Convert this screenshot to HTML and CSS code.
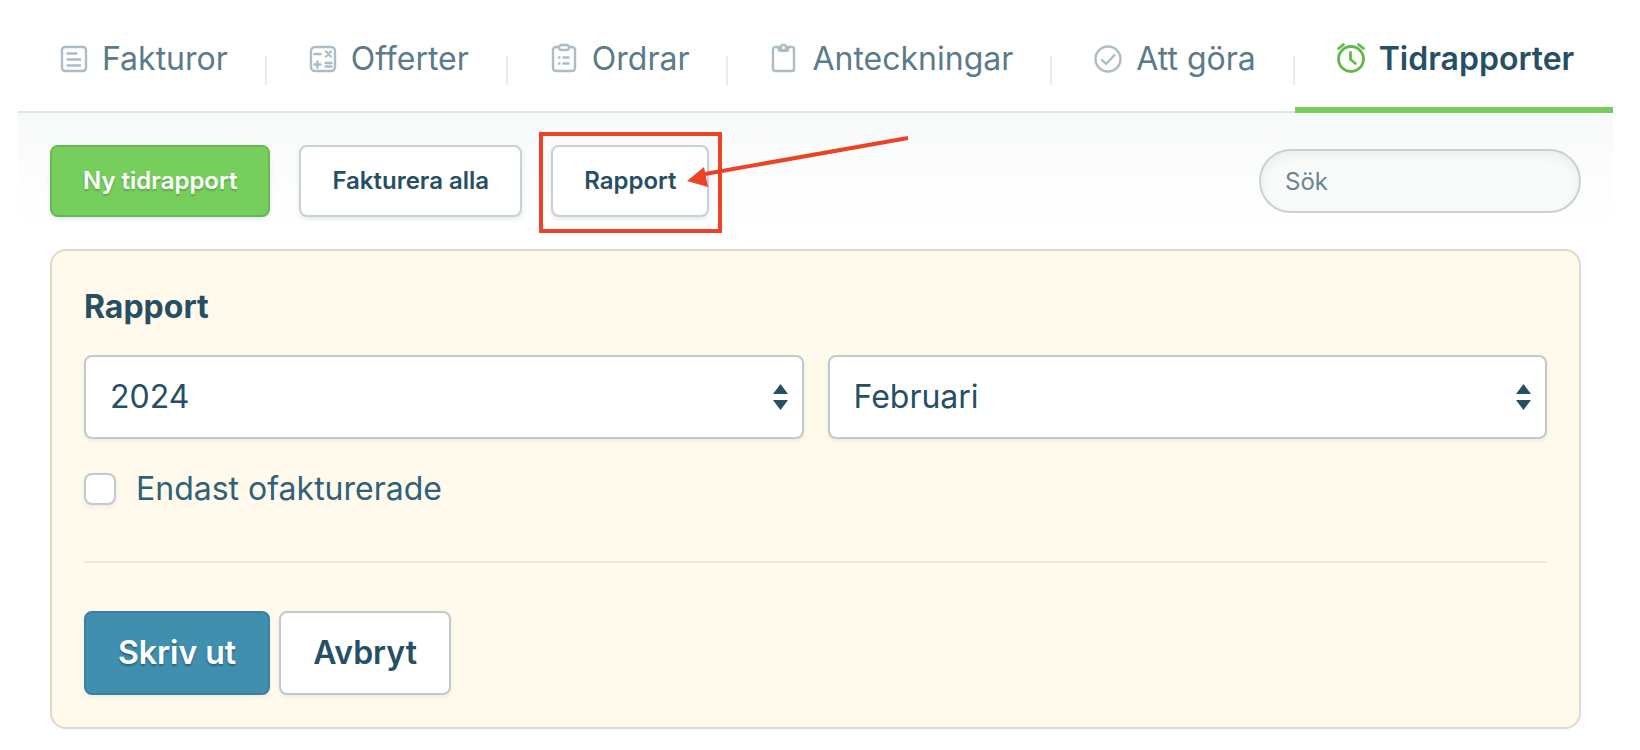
FILE: index.html
```html
<!DOCTYPE html>
<html lang="sv">
<head>
  <meta charset="UTF-8">
  <meta name="viewport" content="width=device-width, initial-scale=1.0">
  <title>Tidrapporter</title>
  <link rel="stylesheet" href="styles.css">
</head>
<body>
  <div class="page">
    <nav class="tabs">
      <a class="tab" href="#fakturor">
        <svg class="icon" viewBox="0 0 32 32">
          <rect x="4" y="4" width="24" height="24" rx="3"/>
          <path d="M9.500 10.500h9M9.500 16.500h12.500M9.500 22.500h12.500"/>
        </svg>
        <span>Fakturor</span>
      </a>
      <a class="tab" href="#offerter">
        <svg class="icon" viewBox="0 0 32 32">
          <rect x="4" y="4" width="24" height="24" rx="4"/>
          <path d="M7.500 11h6M19 8.500l5 5M24 8.500l-5 5M7.500 21.500h6M10.500 18.500v6M18.500 20h6M18.500 23.500h6"/>
        </svg>
        <span>Offerter</span>
      </a>
      <a class="tab" href="#ordrar">
        <svg class="icon" viewBox="0 0 32 32">
          <path d="M11 4H8a3 3 0 0 0-3 3v18a3 3 0 0 0 3 3h16a3 3 0 0 0 3-3V7a3 3 0 0 0-3-3h-3"/>
          <rect x="11" y="2" width="10" height="5" rx="2.500"/>
          <path d="M11 14.500h.5M11 20.500h.5M15.500 14.500h5M15.500 20.500h5"/>
        </svg>
        <span>Ordrar</span>
      </a>
      <a class="tab" href="#anteckningar">
        <svg class="icon" viewBox="0 0 32 32">
          <rect x="5" y="4" width="21" height="24" rx="2"/>
          <path class="fill" d="M9.500 4H12a3.500 3.500 0 0 1 7 0h2.500v2a3 3 0 0 1-3 3h-6a3 3 0 0 1-3-3z"/>
          <circle class="hole" cx="15.500" cy="4.500" r="1.500"/>
        </svg>
        <span>Anteckningar</span>
      </a>
      <a class="tab" href="#att-gora">
        <svg class="icon" viewBox="0 0 32 32">
          <circle cx="16" cy="16" r="12.500"/>
          <path d="M10 17l4 4 8.500-9"/>
        </svg>
        <span>Att göra</span>
      </a>
      <a class="tab active" href="#tidrapporter" aria-current="page">
        <svg class="icon" viewBox="0 0 32 32">
          <circle cx="16" cy="16" r="12.500"/>
          <path d="M15.500 9.500v7l5 4M3.500 5.500l5-4M23.500 1.500l5 4"/>
        </svg>
        <span>Tidrapporter</span>
      </a>
    </nav>

    <main class="content">
      <div class="toolbar">
        <button class="button primary" type="button">Ny tidrapport</button>
        <button class="button" type="button">Fakturera alla</button>
        <div class="marked">
          <button class="button" type="button">Rapport</button>
          <svg class="arrow" viewBox="0 0 222 56">
            <path class="line" d="M18 41L221 5"/>
            <path class="head" d="M0 48l17-14 4 20z"/>
          </svg>
        </div>
        <input class="search" type="search" placeholder="Sök" aria-label="Sök">
      </div>

      <form class="panel">
        <h2>Rapport</h2>
        <div class="fields">
          <div class="select">
            <select aria-label="År">
              <option>2023</option>
              <option selected>2024</option>
            </select>
            <svg viewBox="0 0 15 26"><path d="M0 10L7.500 0 15 10zM0 16h15L7.500 26z"/></svg>
          </div>
          <div class="select">
            <select aria-label="Månad">
              <option>Januari</option>
              <option selected>Februari</option>
              <option>Mars</option>
            </select>
            <svg viewBox="0 0 15 26"><path d="M0 10L7.500 0 15 10zM0 16h15L7.500 26z"/></svg>
          </div>
        </div>
        <label class="check">
          <input type="checkbox">
          <span>Endast ofakturerade</span>
        </label>
        <div class="actions">
          <button class="button large blue" type="button">Skriv ut</button>
          <button class="button large" type="button">Avbryt</button>
        </div>
      </form>
    </main>
  </div>
</body>
</html>
```

FILE: styles.css
```css
* {
  box-sizing: border-box;
}
body {
  margin: 0;
  background: #fff;
  color: #264f63;
  font-family: Inter, "Liberation Sans", sans-serif;
  font-size: 32px;
  line-height: 40px;
}
button,
input,
select {
  font: inherit;
  color: inherit;
}
.page {
  margin: 0 27px 0 18px;
}

/* Tabs */
.tabs {
  display: flex;
  height: 113px;
  border-bottom: 2px solid #dfe7e9;
}
.tab {
  position: relative;
  display: flex;
  align-items: center;
  gap: 12px;
  padding: 6px 39px 0 40px;
  color: #5c7a89;
  text-decoration: none;
  white-space: nowrap;
}
.tab:not(.active)::after {
  content: "";
  position: absolute;
  right: 0;
  top: 56px;
  width: 2px;
  height: 29px;
  background: #e7eced;
}
.tab.active {
  flex: 1;
  margin-bottom: -2px;
  padding-bottom: 2px;
  color: #264f63;
  font-weight: 600;
  box-shadow: inset 0 -6px #76ce5d;
}
.icon {
  width: 32px;
  height: 32px;
  flex: none;
  overflow: visible;
  fill: none;
  stroke: #adbdc5;
  stroke-width: 2.4;
  stroke-linecap: round;
  stroke-linejoin: round;
}
.icon .fill {
  fill: #adbdc5;
  stroke: none;
}
.icon .hole {
  fill: #fff;
  stroke: none;
}
.active .icon {
  stroke: #62b84b;
  stroke-width: 2.8;
}

/* Toolbar */
.content {
  padding: 32px 32px 20px;
  background: linear-gradient(#f8faf9, #fff 120px);
}
.toolbar {
  display: flex;
  align-items: center;
  gap: 29px;
  margin-bottom: 32px;
}
.button {
  height: 72px;
  padding: 0 31px;
  border: 2px solid #c6d2d5;
  border-radius: 8px;
  background: #fff;
  box-shadow: 0 2px 4px rgba(38, 79, 99, 0.12);
  color: #264f63;
  font-size: 24px;
  font-weight: 600;
  white-space: nowrap;
  cursor: pointer;
}
.button.primary {
  border-color: #67b850;
  background: #76ce5d;
  color: #fff;
  text-shadow: 0 2px 2px rgba(0, 0, 0, 0.2);
}
.search {
  width: 322px;
  height: 64px;
  margin-left: auto;
  padding: 0 24px;
  border: 2px solid #c6d2d5;
  border-radius: 32px;
  background: #f9fbfa;
  box-shadow: inset 0 4px 12px rgba(0, 0, 0, 0.06);
  font-size: 24px;
  appearance: none;
}
.search::placeholder {
  color: #6b858e;
  opacity: 1;
}

/* Red frame and arrow on top of the button */
.marked {
  position: relative;
}
.marked .button {
  display: block;
}
.marked::after {
  content: "";
  position: absolute;
  inset: -13px -13px -16px -12px;
  border: 4px solid #ec4226;
  pointer-events: none;
}
.arrow {
  position: absolute;
  z-index: 1;
  left: 136px;
  top: -12px;
  width: 222px;
  height: 56px;
  pointer-events: none;
}
.arrow .line {
  fill: none;
  stroke: #ec4226;
  stroke-width: 4;
}
.arrow .head {
  fill: #ec4226;
}

/* Report panel */
.panel {
  padding: 36px 32px 32px;
  border: 2px solid #e5d7c5;
  border-radius: 16px;
  background: #fffaec;
}
.panel h2 {
  margin: 0 0 28px;
  font-size: 32px;
  font-weight: 700;
}
.fields {
  display: grid;
  grid-template-columns: 1fr 1fr;
  gap: 24px;
}
.select {
  position: relative;
}
.select select {
  display: block;
  width: 100%;
  height: 84px;
  padding: 0 48px 0 24px;
  border: 2px solid #c1c9ce;
  border-radius: 8px;
  background: #fff;
  box-shadow: 0 2px 4px rgba(38, 79, 99, 0.08);
  appearance: none;
}
.select svg {
  position: absolute;
  right: 16px;
  top: 29px;
  width: 15px;
  height: 26px;
  fill: #264f63;
  pointer-events: none;
}
.check {
  display: flex;
  align-items: center;
  gap: 20px;
  margin: 30px 0 52px;
  color: #2f6179;
}
.check input {
  width: 32px;
  height: 32px;
  margin: 0;
  border: 2px solid #c4c9d1;
  border-radius: 8px;
  background: #fff;
  box-shadow: 0 2px 4px rgba(38, 79, 99, 0.08);
  appearance: none;
}
.check input:checked {
  background: #408fae;
}
.actions {
  display: flex;
  gap: 9px;
  padding-top: 48px;
  border-top: 2px solid #f0e8dc;
}
.button.large {
  height: 84px;
  padding: 0 32px;
  border-color: #c1c9ce;
  box-shadow: 0 2px 4px rgba(38, 79, 99, 0.08);
  font-size: 32px;
}
.button.blue {
  border-color: #3a819d;
  background: #408fae;
  color: #fff;
  text-shadow: 0 2px 2px rgba(0, 0, 0, 0.3);
}
```
